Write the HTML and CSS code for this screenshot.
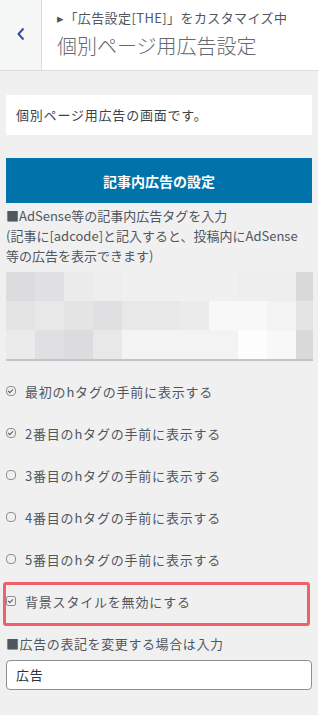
FILE: index.html
```html
<!DOCTYPE html>
<html lang="ja">
<head>
  <meta charset="UTF-8" />
  <meta name="viewport" content="width=device-width, initial-scale=1.0"/>
  <title>個別ページ用広告設定</title>
  <link rel="stylesheet" href="styles.css">
</head>
<body>
  <div class="header">
    <div class="back">
      <svg width="10" height="14" viewBox="0 0 10 14"><path d="M7.5 1.5 L2.5 7 L7.5 12.5" fill="none" stroke="#3b4b9c" stroke-width="2"/></svg>
    </div>
    <div class="titles">
      <div class="crumb">▸「広告設定[THE]」をカスタマイズ中</div>
      <div class="title">個別ページ用広告設定</div>
    </div>
  </div>

  <div class="panel">
    <div class="desc">個別ページ用広告の画面です。</div>

    <div class="section-btn">記事内広告の設定</div>

    <div class="label">■AdSense等の記事内広告タグを入力<br>(記事に[adcode]と記入すると、投稿内にAdSense<br>等の広告を表示できます)</div>

    <div class="mosaic">
      <i class="c1"></i><i class="c2"></i><i class="c5"></i><i class="c6"></i><i class="c7"></i><i class="c7"></i><i class="c7"></i><i class="c7"></i><i class="c6"></i><i class="c6"></i><i class="c0"></i>
      <i class="c3"></i><i class="c4"></i><i class="c3"></i><i class="c2"></i><i class="c4"></i><i class="c4"></i><i class="c5"></i><i class="c9"></i><i class="c9"></i><i class="c8"></i><i class="c3"></i>
      <i class="c5"></i><i class="c2"></i><i class="c1"></i><i class="c4"></i><i class="c8"></i><i class="c8"></i><i class="c8"></i><i class="c8"></i><i class="cw"></i><i class="c9"></i><i class="c0"></i>
    </div>

    <div class="options">
      <div class="opt"><span class="box on"></span>最初のhタグの手前に表示する</div>
      <div class="opt"><span class="box on"></span>2番目のhタグの手前に表示する</div>
      <div class="opt"><span class="box"></span>3番目のhタグの手前に表示する</div>
      <div class="opt"><span class="box"></span>4番目のhタグの手前に表示する</div>
      <div class="opt"><span class="box"></span>5番目のhタグの手前に表示する</div>
    </div>

    <div class="highlight">
      <div class="opt-in"><span class="box on sq"></span>背景スタイルを無効にする</div>
    </div>

    <div class="label label-2">■広告の表記を変更する場合は入力</div>
    <div class="field">広告</div>
  </div>
</body>
</html>
```

FILE: styles.css
```css
body {
  margin: 0;
  background: #f0f0f1;
  color: #50575e;
  font-family: "Noto Sans CJK JP", "Noto Sans", sans-serif;
  font-size: 13px;
}
.header {
  display: flex;
  height: 70px;
  background: #fff;
  border-bottom: 1px solid #dcdcde;
}
.back {
  width: 41px;
  border-right: 1px solid #dcdcde;
  background: #f6f7f7;
  display: flex;
  align-items: center;
  justify-content: center;
  padding-bottom: 2px;
}
.titles {
  padding-left: 15px;
  padding-top: 8px;
}
.crumb {
  font-size: 13px;
  line-height: 20px;
  letter-spacing: 0.4px;
  color: #50575e;
}
.title {
  font-size: 20px;
  font-weight: 300;
  line-height: 32px;
  margin-top: 2px;
  color: #646970;
}
.panel {
  padding: 0 6px;
}
.desc {
  margin-top: 24px;
  height: 40px;
  background: #fff;
  padding-left: 10px;
  line-height: 40px;
  letter-spacing: 0.8px;
  color: #3c434a;
}
.section-btn {
  margin-top: 23px;
  height: 45px;
  background: #0073aa;
  color: #fff;
  font-size: 14px;
  font-weight: bold;
  line-height: 47px;
  text-align: center;
}
.label {
  margin-top: 3px;
  line-height: 20px;
  color: #50575e;
}
.mosaic {
  margin-top: 6px;
  margin-right: -2px;
  display: grid;
  grid-template-columns: repeat(10, 29px) 17px;
  grid-auto-rows: 29px;
  border-bottom: 2px solid #c3c4c7;
  width: 307px;
}
.mosaic i { display: block; }
.c0 { background: #d9d9db; }
.c1 { background: #dcdcde; }
.c2 { background: #e0e0e2; }
.c3 { background: #e4e4e5; }
.c4 { background: #e8e8e9; }
.c5 { background: #ebebec; }
.c6 { background: #eeeeef; }
.c7 { background: #f0f0f1; }
.c8 { background: #f3f3f4; }
.c9 { background: #f8f8f8; }
.cw { background: #fdfdfd; }
.options {
  margin-top: 9px;
}
.opt {
  height: 42px;
  display: flex;
  align-items: center;
  letter-spacing: 0.8px;
}
.box {
  width: 8px;
  height: 8px;
  border: 1px solid #8c8f94;
  border-radius: 4px;
  margin: 0 9px 0 0;
  position: relative;
  flex-shrink: 0;
}
.box.sq { border-radius: 2px; }
.box.on::after {
  content: "";
  position: absolute;
  left: 2px;
  top: 1px;
  width: 2px;
  height: 4px;
  border: solid #50575e;
  border-width: 0 1px 1px 0;
  transform: rotate(45deg);
}
.highlight {
  margin: 2px 0 0 -3px;
  width: 301px;
  height: 38px;
  border: 3px solid #f0616d;
  border-radius: 3px;
}
.opt-in {
  display: flex;
  align-items: center;
  height: 20px;
  margin-top: 6px;
  letter-spacing: 0.8px;
}
.label-2 {
  margin-top: 8px;
  letter-spacing: 0.6px;
}
.field {
  margin-top: 6px;
  height: 28px;
  background: #fff;
  border: 1px solid #8c8f94;
  border-radius: 4px;
  padding-left: 9px;
  line-height: 28px;
  letter-spacing: 0.8px;
  color: #2c3338;
}
```
